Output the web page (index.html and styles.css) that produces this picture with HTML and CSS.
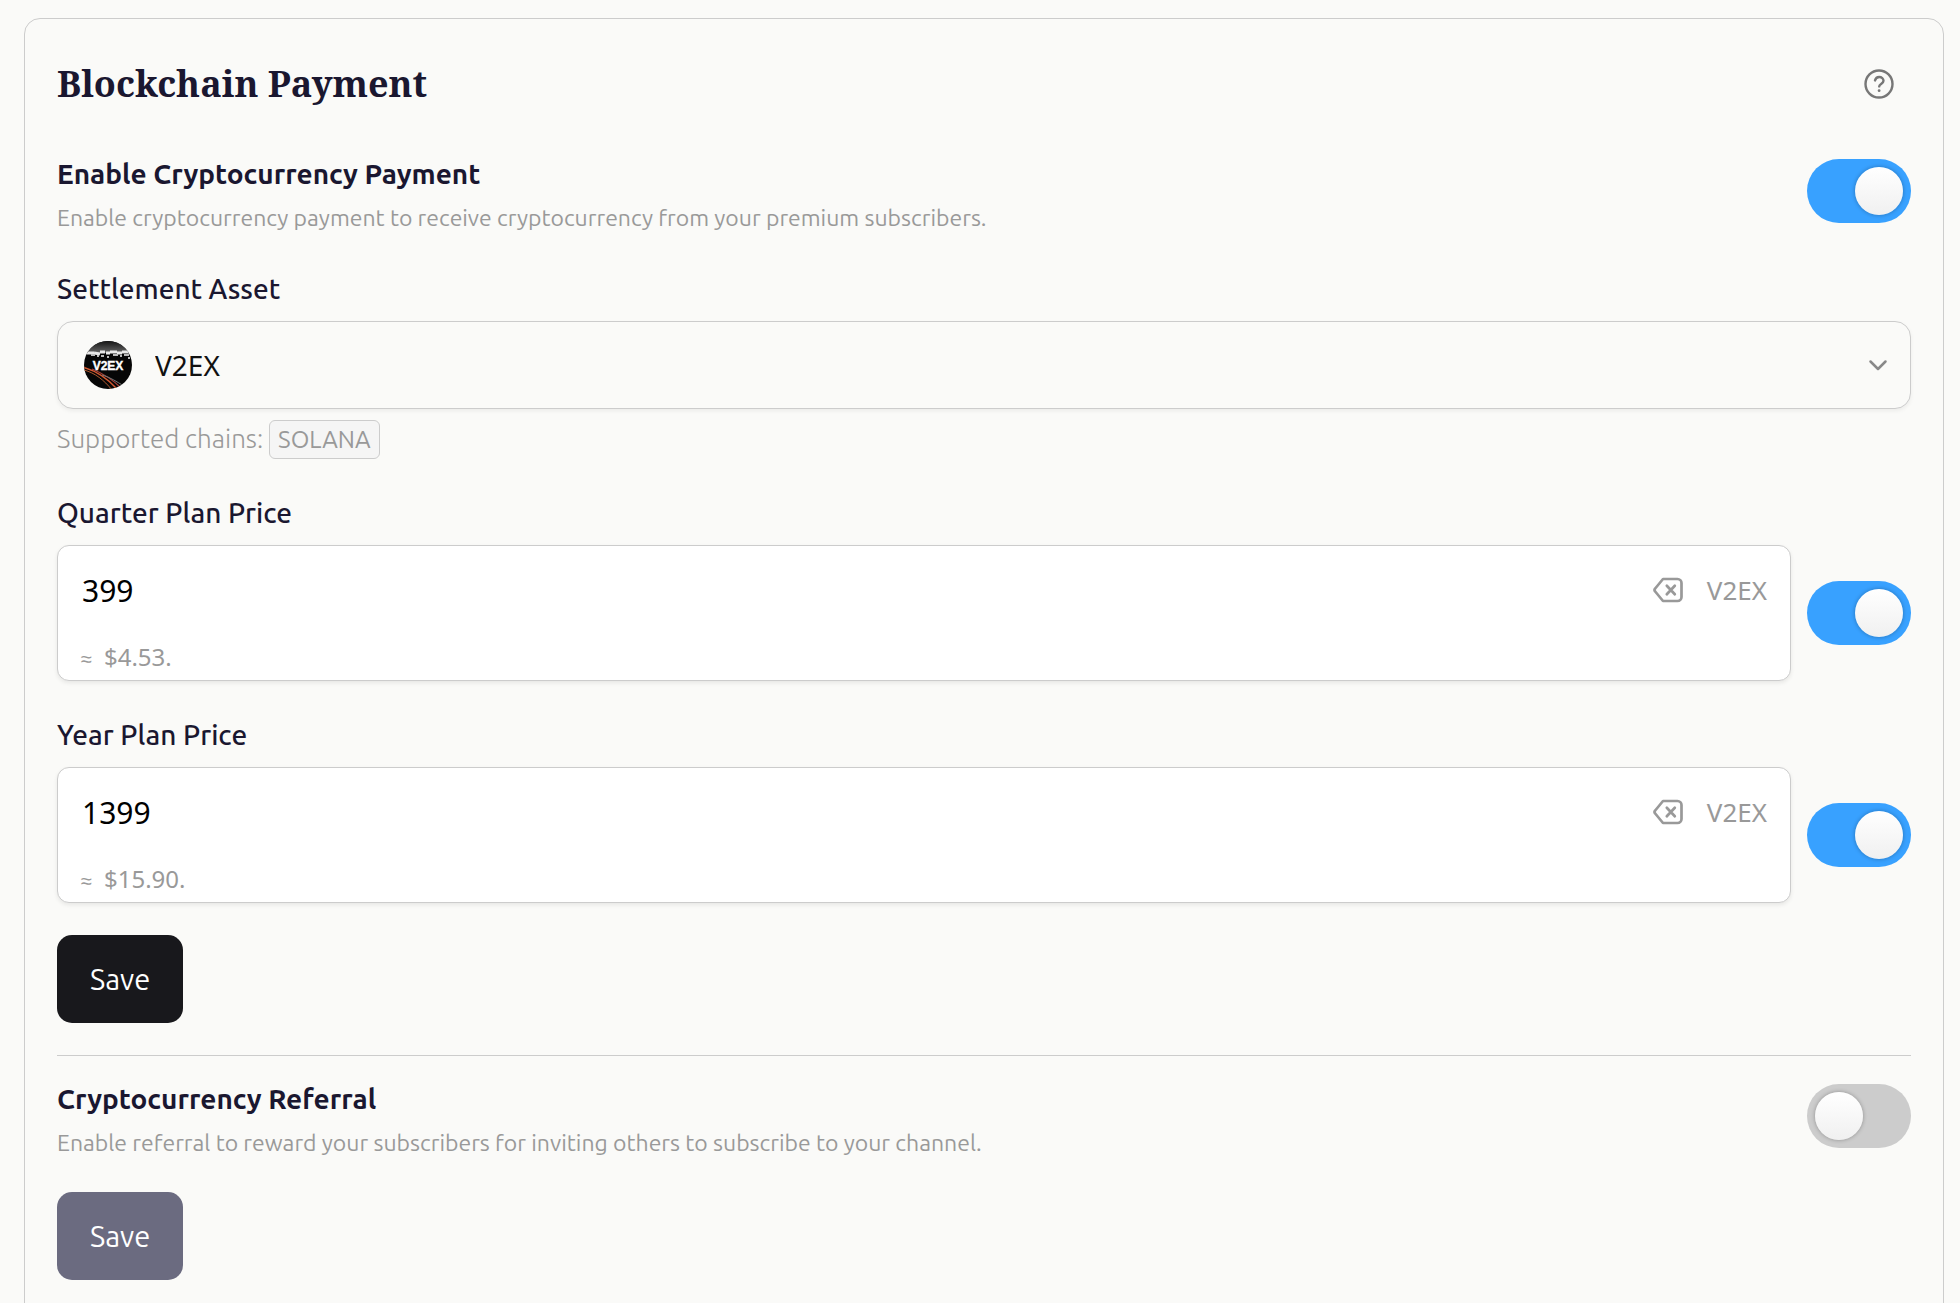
FILE: index.html
```html
<!DOCTYPE html>
<html lang="en">
<head>
    <meta charset="UTF-8">
    <title>Blockchain Payment</title>
    <meta name="viewport" content="width=device-width, initial-scale=1.0">
    <link rel="stylesheet" href="styles.css">
</head>

<body>

<main class="card">
    <header class="card-header">
        <h1>Blockchain Payment</h1>
        <button type="button" class="icon-button help" aria-label="Help">
            <svg width="32" height="32" viewBox="0 0 32 32" fill="none" stroke="currentColor" stroke-width="2.4" stroke-linecap="round" stroke-linejoin="round">
                <circle cx="16" cy="16" r="13.5"/>
                <path d="M12 12.4c.6-2.2 2.2-3.4 4.2-3.4 2.4 0 4.3 1.6 4.3 3.8 0 3.2-4.3 3.2-4.3 5.6"/>
                <path d="M16.1 22.6v.1" stroke-width="2.8"/>
            </svg>
        </button>
    </header>

    <form class="payment">
        <div class="setting">
            <div class="setting-text">
                <h2><label for="enable">Enable Cryptocurrency Payment</label></h2>
                <p>Enable cryptocurrency payment to receive cryptocurrency from your premium subscribers.</p>
            </div>
            <input type="checkbox" class="toggle" id="enable" checked>
        </div>

        <div class="field">
            <label for="asset">Settlement Asset</label>
            <div class="select-box">
                <svg class="coin" width="48" height="48" viewBox="0 0 48 48" aria-hidden="true">
                    <defs>
                        <clipPath id="round"><circle cx="24" cy="24" r="24"/></clipPath>
                        <linearGradient id="sky" x1="0" y1="0" x2="0" y2="1">
                            <stop offset="0" stop-color="#151515"/>
                            <stop offset="1" stop-color="#666"/>
                        </linearGradient>
                    </defs>
                    <g clip-path="url(#round)">
                        <rect width="48" height="48" fill="#060606"/>
                        <rect width="48" height="12" fill="url(#sky)"/>
                        <path d="M3 12h7M10 12l6 1M16 11h5M22 12h4M26 11h7M33 12h5M38 11h7" stroke="#e8e8e8" stroke-width="3"/>
                        <path d="M7 14h4M13 15h2M17 15h3M23 16h2M29 14h5M36 15h2M40 14h5M44 17h2" stroke="#bbb" stroke-width="2"/>
                        <path d="M0 26.5C12 30 23 37 33 48" fill="none" stroke="#d4572f" stroke-width="1.4"/>
                        <path d="M0 29C11 32 20 39 28 49" fill="none" stroke="#b05a30" stroke-width="1"/>
                        <path d="M8 28C18 32 28 38 37 47" fill="none" stroke="#a3403a" stroke-width="1.2"/>
                        <path d="M18 34C26 36 33 41 40 45" fill="none" stroke="#777" stroke-width="1"/>
                        <text x="24" y="28.5" text-anchor="middle" class="coin-text">V2EX</text>
                    </g>
                </svg>
                <select id="asset">
                    <option>V2EX</option>
                </select>
                <svg class="chevron" width="20" height="20" viewBox="0 0 20 20" fill="none" stroke="currentColor" stroke-width="2.5" stroke-linecap="round" stroke-linejoin="round" aria-hidden="true">
                    <path d="M2.5 6.5 10 14l7.5-7.5"/>
                </svg>
            </div>
            <p class="chains">Supported chains: <span class="chip">SOLANA</span></p>
        </div>

        <div class="field">
            <label for="quarter">Quarter Plan Price</label>
            <div class="price-row">
                <div class="price-box">
                    <div class="price-line">
                        <input type="text" id="quarter" value="399">
                        <button type="button" class="icon-button" aria-label="Clear quarter price">
                            <svg width="32" height="28" viewBox="0 0 32 28" fill="none" stroke="currentColor" stroke-width="2.7" stroke-linecap="round" stroke-linejoin="round">
                                <path d="M11 3h14.5a4 4 0 0 1 4 4v14a4 4 0 0 1-4 4H11L3.2 15.5a2.2 2.2 0 0 1 0-3z"/>
                                <path d="m14.8 9.8 8 8.4M22.8 9.8l-8 8.4"/>
                            </svg>
                        </button>
                        <span class="unit">V2EX</span>
                    </div>
                    <p class="approx"><span class="sign">≈</span>$4.53.</p>
                </div>
                <input type="checkbox" class="toggle" aria-label="Quarter plan" checked>
            </div>
        </div>

        <div class="field">
            <label for="year">Year Plan Price</label>
            <div class="price-row">
                <div class="price-box">
                    <div class="price-line">
                        <input type="text" id="year" value="1399">
                        <button type="button" class="icon-button" aria-label="Clear year price">
                            <svg width="32" height="28" viewBox="0 0 32 28" fill="none" stroke="currentColor" stroke-width="2.7" stroke-linecap="round" stroke-linejoin="round">
                                <path d="M11 3h14.5a4 4 0 0 1 4 4v14a4 4 0 0 1-4 4H11L3.2 15.5a2.2 2.2 0 0 1 0-3z"/>
                                <path d="m14.8 9.8 8 8.4M22.8 9.8l-8 8.4"/>
                            </svg>
                        </button>
                        <span class="unit">V2EX</span>
                    </div>
                    <p class="approx"><span class="sign">≈</span>$15.90.</p>
                </div>
                <input type="checkbox" class="toggle" aria-label="Year plan" checked>
            </div>
        </div>

        <button type="button" class="save">Save</button>
    </form>

    <form class="referral">
        <div class="setting">
            <div class="setting-text">
                <h2><label for="referral">Cryptocurrency Referral</label></h2>
                <p>Enable referral to reward your subscribers for inviting others to subscribe to your channel.</p>
            </div>
            <input type="checkbox" class="toggle" id="referral">
        </div>
        <button type="button" class="save" disabled>Save</button>
    </form>
</main>

</body>
</html>
```

FILE: styles.css
```css
* {
    box-sizing: border-box;
}

body {
    margin: 0;
    padding: 18px 16px 32px 24px;
    background: #fafaf8;
    color: #1a1730;
    font-family: Ubuntu, "Noto Sans", sans-serif;
    font-size: 28px;
}

h1, h2, p {
    margin: 0;
}

.card {
    padding: 32px 32px 48px;
    border: 1px solid #ccc;
    border-radius: 16px;
}

.card-header {
    display: flex;
    justify-content: space-between;
    align-items: center;
    padding-right: 16px;
    margin-bottom: 37px;
}

h1 {
    font-family: "Noto Serif", "Liberation Serif", serif;
    font-size: 36px;
    line-height: 65px;
}

h2 {
    font-size: 28px;
    font-weight: 600;
    line-height: 42px;
}

.icon-button {
    display: flex;
    padding: 0;
    border: none;
    background: none;
    color: #999;
    cursor: pointer;
}

.help {
    color: #777;
}

.setting {
    display: flex;
    justify-content: space-between;
    align-items: flex-start;
}

.setting .toggle {
    margin-top: 6px;
}

.setting-text p {
    color: #999;
    font-size: 23px;
    line-height: 46px;
}

.field {
    margin-top: 36px;
}

.setting + .field {
    margin-top: 30px;
}

.field > label {
    display: block;
    margin-bottom: 14px;
    font-weight: 500;
    line-height: 36px;
}

/* toggle */
.toggle {
    appearance: none;
    flex: none;
    width: 104px;
    height: 64px;
    margin: 0;
    padding: 8px;
    border-radius: 32px;
    background: #ccc;
    cursor: pointer;
}

.toggle::before {
    content: "";
    display: block;
    width: 48px;
    height: 48px;
    border-radius: 50%;
    background: linear-gradient(#fff, #f0f0f0);
    box-shadow: 0 0 4px rgba(0,0,0,0.3);
}

.toggle:checked {
    background: #38a1ff;
}

.toggle:checked::before {
    margin-left: 40px;
}

/* asset select */
.select-box {
    position: relative;
}

select {
    appearance: none;
    display: block;
    width: 100%;
    height: 88px;
    padding: 0 64px 0 97px;
    border: 1px solid #ccc;
    border-radius: 16px;
    background: #fafaf8;
    color: #111;
    font-family: "Noto Sans", sans-serif;
    font-size: 28px;
    box-shadow: 0 2px 4px rgba(0,0,0,0.06);
}

.coin {
    position: absolute;
    top: 20px;
    left: 27px;
}

.coin-text {
    fill: #fff;
    stroke: #fff;
    stroke-width: 0.4px;
    font-family: "Liberation Sans", sans-serif;
    font-size: 12px;
    font-weight: bold;
}

.chevron {
    position: absolute;
    top: 34px;
    right: 23px;
    color: #888;
}

.chains {
    margin-top: 10px;
    color: #999;
    font-size: 26px;
    font-weight: 300;
    line-height: 40px;
}

.chip {
    display: inline-block;
    padding: 0 8px;
    border: 1px solid #ccc;
    border-radius: 6px;
    background: #f5f5f5;
    font-size: 24px;
    font-weight: 400;
    line-height: 37px;
}

/* price inputs */
.price-row {
    display: flex;
    align-items: center;
    gap: 16px;
}

.price-box {
    flex: 1;
    min-width: 0;
    height: 136px;
    padding: 0 23px;
    border: 1px solid #ccc;
    border-radius: 12px;
    background: #fff;
    box-shadow: 0 2px 4px rgba(0,0,0,0.08);
}

.price-line {
    display: flex;
    align-items: center;
    height: 88px;
}

.price-line input {
    flex: 1;
    min-width: 0;
    padding: 0 1px;
    border: none;
    outline: none;
    background: none;
    color: #000;
    font-family: "Noto Sans", sans-serif;
    font-size: 30px;
}

.unit {
    margin-left: 23px;
    color: #999;
    font-family: "Noto Sans", sans-serif;
    font-size: 26px;
}

.approx {
    color: #999;
    font-family: "Noto Sans", sans-serif;
    font-size: 24px;
    line-height: 46px;
}

.sign {
    margin-right: 12px;
    font-size: 20px;
}

/* buttons */
.save {
    display: block;
    height: 88px;
    margin-top: 32px;
    padding: 0 33px;
    border: none;
    border-radius: 15px;
    background: #18181c;
    color: #fff;
    font-family: Ubuntu, "Noto Sans", sans-serif;
    font-size: 29px;
    cursor: pointer;
}

.save:disabled {
    background: #6b6b80;
    cursor: default;
}

.referral {
    margin-top: 32px;
    padding-top: 22px;
    border-top: 1px solid #ccc;
}

.referral .save {
    margin-top: 26px;
}
```
